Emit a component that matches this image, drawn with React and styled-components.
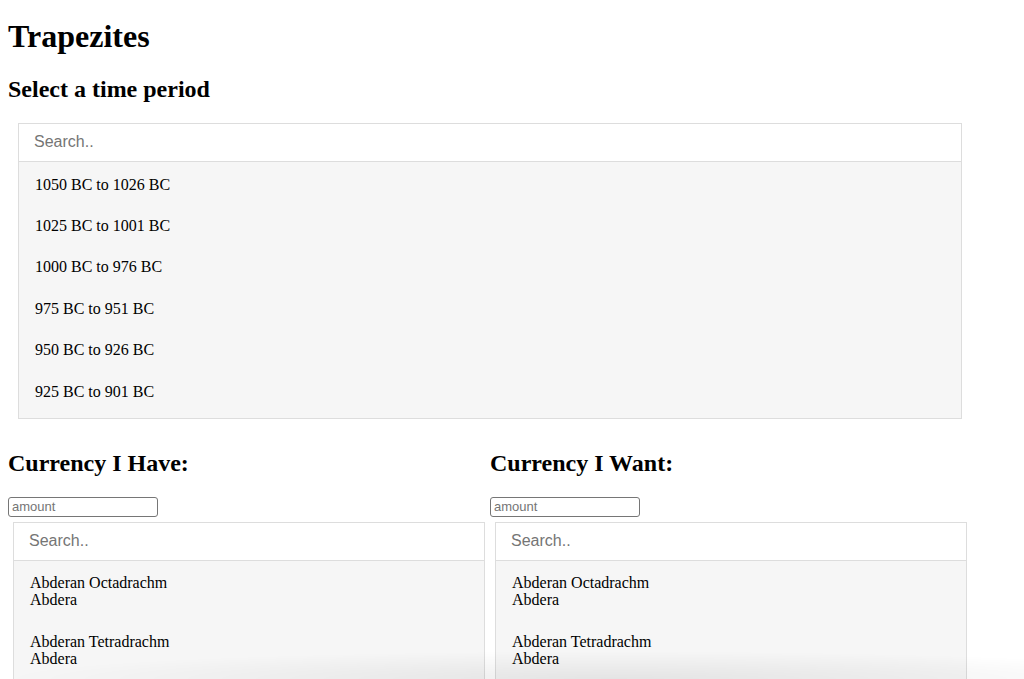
import React from "react";
import styled, { createGlobalStyle } from "styled-components";

const GlobalStyle = createGlobalStyle`
  html, body {
    margin: 0;
    padding: 0;
    background: #fff;
    overflow: hidden;
  }
  body {
    padding: 0 8px;
    font-family: "Liberation Serif", "Times New Roman", serif;
    color: #000;
  }
`;

const Page = styled.div`
  width: 964px;
  padding-top: 18px;
`;

const Title = styled.h1`
  font-size: 32px;
  font-weight: bold;
  margin: 0 0 21px;
  line-height: 37px;
`;

const Heading = styled.h2`
  font-size: 24px;
  font-weight: bold;
  margin: 0 0 19px;
  line-height: 27.6px;
`;

const Dropdown = styled.div`
  box-sizing: border-box;
  width: ${(p) => p.$width}px;
  margin-left: ${(p) => p.$offset}px;
  background: #f6f6f6;
  border: 1px solid #ddd;
  padding-bottom: ${(p) => p.$tail || 0}px;
`;

const SearchInput = styled.input`
  display: block;
  box-sizing: border-box;
  width: 100%;
  height: 38px;
  margin: 0 0 ${(p) => p.$gap || 0}px;
  padding: 0 15px;
  border: none;
  border-bottom: 1px solid #ddd;
  background: #fff;
  font-family: "Liberation Sans", Arial, sans-serif;
  font-size: 16px;
  outline: none;
  &::placeholder {
    color: #757575;
  }
`;

const Option = styled.div`
  padding: 12px 16px;
  font-size: 16px;
  line-height: 17.4px;
  color: #000;
`;

const Columns = styled.div`
  display: grid;
  grid-template-columns: 482px 482px;
  margin-top: 31px;
`;

const Column = styled.div`
  display: flex;
  flex-direction: column;
`;

const Amount = styled.input`
  display: block;
  box-sizing: border-box;
  width: 150px;
  height: 20px;
  margin: 0 0 5px;
  padding: 1px 3px;
  border: 1px solid #767676;
  border-radius: 3px;
  font-family: "Liberation Sans", Arial, sans-serif;
  font-size: 13px;
  &::placeholder {
    color: #757575;
  }
`;

const CoinName = styled.div`
  line-height: 17.5px;
`;

const BottomShade = styled.div`
  position: fixed;
  left: 0;
  right: 0;
  bottom: 0;
  height: 28px;
  pointer-events: none;
  background: radial-gradient(
    ellipse 60% 100% at 60% 100%,
    rgba(0, 0, 0, 0.07),
    rgba(0, 0, 0, 0) 100%
  );
`;

const periods = [
  "1050 BC to 1026 BC",
  "1025 BC to 1001 BC",
  "1000 BC to 976 BC",
  "975 BC to 951 BC",
  "950 BC to 926 BC",
  "925 BC to 901 BC",
];

const coins = [
  { name: "Abderan Octadrachm", city: "Abdera" },
  { name: "Abderan Tetradrachm", city: "Abdera" },
];

const CurrencyPicker = ({ label }) => (
  <Column>
    <Heading>{label}</Heading>
    <Amount placeholder="amount" />
    <Dropdown $width={472} $offset={5}>
      <SearchInput placeholder="Search.." $gap={1} />
      {coins.map(({ name, city }) => (
        <Option key={name}>
          <CoinName>{name}</CoinName>
          <CoinName>{city}</CoinName>
        </Option>
      ))}
    </Dropdown>
  </Column>
);

const App = () => {
  return (
    <>
      <GlobalStyle />
      <Page>
        <Title>Trapezites</Title>
        <Heading>Select a time period</Heading>
        <Dropdown $width={944} $offset={10} $tail={6}>
          <SearchInput placeholder="Search.." $gap={2} />
          {periods.map((p) => (
            <Option key={p}>{p}</Option>
          ))}
        </Dropdown>
        <Columns>
          <CurrencyPicker label="Currency I Have:" />
          <CurrencyPicker label="Currency I Want:" />
        </Columns>
      </Page>
      <BottomShade />
    </>
  );
};

export default App;
